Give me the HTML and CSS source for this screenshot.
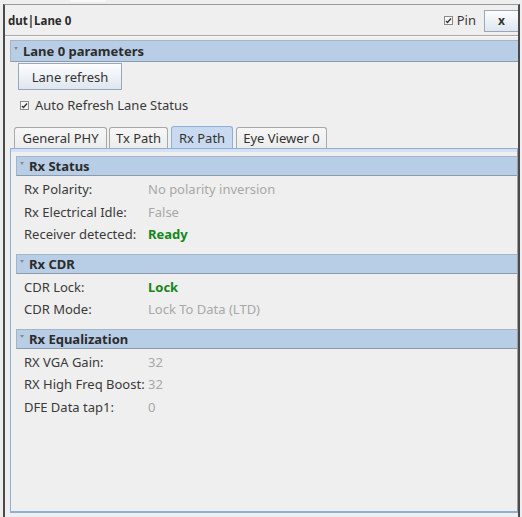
FILE: index.html
```html
<!DOCTYPE html>
<html>
<head>
<meta charset="utf-8">
<link rel="stylesheet" href="styles.css">
</head>
<body>
<div class="topstrip"><div class="toptab"></div></div>
<div class="frame">
  <div class="titlebar">
    <span class="title">dut|Lane 0</span>
    <span class="pin"><span class="cb"><svg width="9" height="9" viewBox="0 0 9 9"><path d="M2 5 L3.5 6.5 L7 2.5" stroke="#333" stroke-width="1.4" fill="none"/></svg></span>Pin</span>
    <button class="btn xbtn">x</button>
  </div>
  <div class="body">
    <div class="hdr main"><span class="tri"></span>Lane 0 parameters</div>
    <div class="lane-body">
      <button class="btn refresh">Lane refresh</button>
      <div class="auto"><span class="cb"><svg width="9" height="9" viewBox="0 0 9 9"><path d="M2 5 L3.5 6.5 L7 2.5" stroke="#333" stroke-width="1.4" fill="none"/></svg></span>Auto Refresh Lane Status</div>
    </div>
    <div class="tabs">
      <div class="tab t1">General PHY</div>
      <div class="tab t2">Tx Path</div>
      <div class="tab t3 sel">Rx Path</div>
      <div class="tab t4">Eye Viewer 0</div>
    </div>
    <div class="panel">
      <div class="band"></div>
      <div class="section">
        <div class="hdr"><span class="tri"></span>Rx Status</div>
        <div class="rows">
          <div class="row"><span class="lbl">Rx Polarity:</span><span class="val">No polarity inversion</span></div>
          <div class="row"><span class="lbl">Rx Electrical Idle:</span><span class="val">False</span></div>
          <div class="row"><span class="lbl">Receiver detected:</span><span class="val ok">Ready</span></div>
        </div>
      </div>
      <div class="section">
        <div class="hdr"><span class="tri"></span>Rx CDR</div>
        <div class="rows">
          <div class="row"><span class="lbl">CDR Lock:</span><span class="val ok">Lock</span></div>
          <div class="row"><span class="lbl">CDR Mode:</span><span class="val">Lock To Data (LTD)</span></div>
        </div>
      </div>
      <div class="section">
        <div class="hdr"><span class="tri"></span>Rx Equalization</div>
        <div class="rows">
          <div class="row"><span class="lbl">RX VGA Gain:</span><span class="val">32</span></div>
          <div class="row"><span class="lbl">RX High Freq Boost:</span><span class="val">32</span></div>
          <div class="row"><span class="lbl">DFE Data tap1:</span><span class="val">0</span></div>
        </div>
      </div>
    </div>
  </div>
</div>
</body>
</html>
```

FILE: styles.css
```css
* { box-sizing: border-box; }
html, body { margin: 0; padding: 0; }
body {
  width: 522px;
  height: 517px;
  background: #eeeeee;
  font-family: "Noto Sans", "Open Sans", sans-serif;
  font-size: 13px;
  color: #3a3a3a;
  overflow: hidden;
}
.topstrip {
  height: 4px;
}
.toptab {
  margin-left: 70px;
  width: 36px;
  height: 2px;
  background: #f8f8f8;
}
.frame {
  margin-left: 3px;
  width: 517px;
  height: 513px;
  border-top: 1px solid #9a9a9a;
  border-left: 2px solid #4a4a4a;
  border-right: 2px solid #4a4a4a;
  background: #efefef;
  display: flex;
  flex-direction: column;
}
.titlebar {
  height: 31px;
  border-bottom: 1px solid #a9a9a9;
  box-shadow: 0 1px 0 #f8f8f8;
  display: flex;
  align-items: center;
  padding-left: 3px;
}
.title {
  font-weight: bold;
  font-size: 11.5px;
  color: #2a2a2a;
  flex: 1;
}
.pin {
  display: flex;
  align-items: center;
  color: #3a3a3a;
  margin-right: 8px;
}
.cb {
  display: inline-flex;
  width: 9px;
  height: 9px;
  border: 1px solid #8a8a8a;
  background: #f6f6f6;
  margin-right: 4px;
  position: relative;
}
.cb svg { position: absolute; left: -1px; top: -1px; }
.btn {
  font-family: "Noto Sans", "Open Sans", sans-serif;
  font-size: 13px;
  color: #333;
  border: 1px solid #97a8bc;
  background: linear-gradient(#fdfdfe, #dfe6ef);
  padding: 0;
  margin: 0;
}
.xbtn {
  width: 34px;
  height: 22px;
  font-size: 12px;
  font-weight: bold;
  margin-top: 1px;
  border-right: none;
}
.body {
  flex: 1;
  padding: 4px 0 0 5px;
  display: flex;
  flex-direction: column;
}
.hdr {
  height: 20px;
  background: #b8cee6;
  border-top: 1px solid #a5b5c6;
  border-bottom: 1px solid #8b9bab;
  border-left: 1px solid #a5b5c6;
  font-weight: bold;
  color: #2c2c2c;
  display: flex;
  align-items: center;
  font-size: 13px;
}
.hdr.main { height: 22px; }
.tri {
  width: 0;
  height: 0;
  border-left: 2.5px solid transparent;
  border-right: 2.5px solid transparent;
  border-top: 3px solid #8a8a8a;
  margin: 0 5px 5px 3px;
}
.lane-body {
  padding: 1px 0 0 8px;
  height: 64px;
}
.refresh {
  width: 104px;
  height: 27px;
  display: block;
}
.auto {
  display: flex;
  align-items: center;
  margin-top: 6px;
  padding-left: 2px;
}
.auto .cb { margin-right: 6px; }
.tabs {
  display: flex;
  align-items: flex-end;
  height: 22px;
  padding-left: 4px;
}
.tab {
  height: 21px;
  border: 1px solid #a8a8a8;
  border-bottom: none;
  border-radius: 3px 3px 0 0;
  background: linear-gradient(#f7f7f7, #ececec);
  display: flex;
  align-items: center;
  justify-content: center;
  white-space: nowrap;
  margin-right: 2px;
  color: #333;
  flex: none;
}
.tab.t1 { width: 93px; }
.tab.t2 { width: 59px; margin-right: 3px; }
.tab.t3 { width: 62px; margin-right: 3px; }
.tab.t4 { width: 91px; }
.tab.sel {
  background: #c9daf0;
  border-color: #8fb0d6;
  height: 22px;
}
.panel {
  flex: 1;
  border-top: 1px solid #8fb0d6;
  border-left: 1px solid #8fb0d6;
  border-bottom: 2px solid #8fb0d6;
  border-right: 1px solid #a0a0a0;
  margin-bottom: 4px;
  padding: 0 0 0 5px;
}
.band {
  height: 3px;
  margin-left: -5px;
  background: #d3e1f2;
  margin-bottom: 4px;
}
.rows {
  padding: 2px 0 8px 8px;
}
.row {
  height: 22.5px;
  display: flex;
  align-items: center;
}
.lbl { width: 124px; color: #3a3a3a; }
.val { color: #a8a8a8; }
.val.ok { color: #14861a; font-weight: bold; }
```
